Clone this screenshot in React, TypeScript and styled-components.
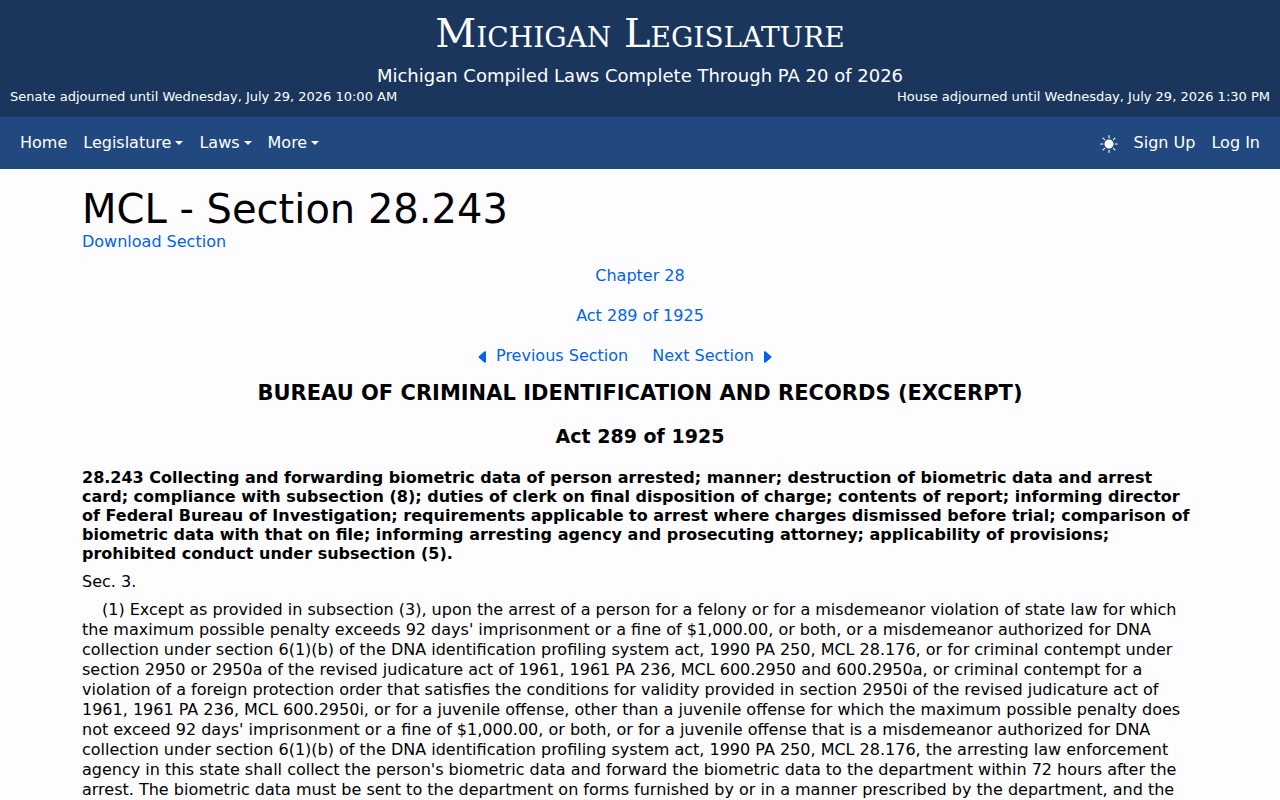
import React from "react";
import styled, { createGlobalStyle } from "styled-components";
import { BsSunFill, BsCaretLeftFill, BsCaretRightFill } from "react-icons/bs";

const GlobalStyle = createGlobalStyle`
  *, *::before, *::after { box-sizing: border-box; }
  html { scrollbar-width: none; }
  body {
    margin: 0;
    background: #fdfdff;
    color: #000;
    font-family: "DejaVu Sans", sans-serif;
    font-size: 16px;
    line-height: 24px;
  }
`;

const Page = styled.div`
  min-height: 100vh;
`;

const Banner = styled.header`
  padding: 4px 10px 11px;
  background: #1a365d;
  color: #fff;
  text-align: center;
`;

const SiteName = styled.div`
  margin-bottom: 2px;
  font-family: "DejaVu Serif", serif;
  font-size: 40px;
  line-height: 58px;
  font-variant: small-caps;
`;

const Currency = styled.div`
  font-size: 18px;
  line-height: 24px;
`;

const Adjournments = styled.div`
  display: flex;
  justify-content: space-between;
  font-size: 13px;
  line-height: 18px;
`;

const NavBar = styled.nav`
  display: flex;
  justify-content: space-between;
  padding: 6px 12px;
  background: #21487f;
`;

const NavGroup = styled.div`
  display: flex;
  align-items: center;
`;

const NavLink = styled.a`
  padding: 8px;
  color: #fff;
  text-decoration: none;
`;

const NavButton = styled.button<{ $caret?: boolean }>`
  display: flex;
  align-items: center;
  padding: 8px;
  border: 0;
  background: none;
  color: #fff;
  font: inherit;
  line-height: 24px;
  cursor: pointer;

  &::after {
    content: "";
    display: ${(p) => (p.$caret ? "block" : "none")};
    margin-left: 4px;
    border: 4px solid transparent;
    border-top-color: currentColor;
    border-bottom: 0;
  }
`;

const ThemeButton = styled(NavButton)`
  padding-top: 10px;
`;

const Content = styled.main`
  max-width: 1140px;
  margin: 0 auto;
  padding: 19px 12px 16px;
`;

const Title = styled.h1`
  margin: 0;
  font-size: 40px;
  font-weight: 400;
  line-height: 42px;
`;

const Link = styled.a`
  color: #0062ee;
  text-decoration: none;
`;

const Crumb = styled.div`
  margin-bottom: 16px;
  text-align: center;
`;

const Crumbs = styled.div`
  padding-top: 10px;
`;

const Pager = styled.div`
  display: flex;
  justify-content: center;
  gap: 24px;
  padding-right: 30px;
`;

const PagerLink = styled(Link)`
  display: flex;
  align-items: center;
  gap: 5px;

  svg {
    margin-top: 2px;
  }
`;

const ActTitle = styled.h2`
  margin: 12px 0 0;
  font-size: 21px;
  line-height: 26px;
  text-align: center;
`;

const ActNumber = styled.h3`
  margin: 18px 0 20px;
  font-size: 19px;
  line-height: 24px;
  text-align: center;
`;

const CatchLine = styled.h4`
  margin: 0 0 9px;
  font-size: 16px;
  line-height: 19px;
`;

const Paragraph = styled.p<{ $indent?: boolean }>`
  margin: 0 0 8px;
  line-height: 20px;
  text-indent: ${(p) => (p.$indent ? "20px" : "0")};
`;

export default function App() {
  return (
    <Page>
      <GlobalStyle />
      <Banner>
        <SiteName>Michigan Legislature</SiteName>
        <Currency>Michigan Compiled Laws Complete Through PA 20 of 2026</Currency>
        <Adjournments>
          <span>Senate adjourned until Wednesday, July 29, 2026 10:00 AM</span>
          <span>House adjourned until Wednesday, July 29, 2026 1:30 PM</span>
        </Adjournments>
      </Banner>
      <NavBar>
        <NavGroup>
          <NavLink href="#home">Home</NavLink>
          <NavButton $caret>Legislature</NavButton>
          <NavButton $caret>Laws</NavButton>
          <NavButton $caret>More</NavButton>
        </NavGroup>
        <NavGroup>
          <ThemeButton aria-label="Toggle theme"><BsSunFill size={18} /></ThemeButton>
          <NavLink href="#signup">Sign Up</NavLink>
          <NavLink href="#login">Log In</NavLink>
        </NavGroup>
      </NavBar>
      <Content>
        <Title>MCL - Section 28.243</Title>
        <Link href="#download">Download Section</Link>
        <Crumbs>
          <Crumb><Link href="#chapter">Chapter 28</Link></Crumb>
          <Crumb><Link href="#act">Act 289 of 1925</Link></Crumb>
        </Crumbs>
        <Pager>
          <PagerLink href="#previous"><BsCaretLeftFill size={16} />Previous Section</PagerLink>
          <PagerLink href="#next">Next Section<BsCaretRightFill size={16} /></PagerLink>
        </Pager>
        <ActTitle>BUREAU OF CRIMINAL IDENTIFICATION AND RECORDS (EXCERPT)</ActTitle>
        <ActNumber>Act 289 of 1925</ActNumber>
        <CatchLine>
          28.243 Collecting and forwarding biometric data of person arrested; manner; destruction of
          biometric data and arrest card; compliance with subsection (8); duties of clerk on final
          disposition of charge; contents of report; informing director of Federal Bureau of
          Investigation; requirements applicable to arrest where charges dismissed before trial;
          comparison of biometric data with that on file; informing arresting agency and prosecuting
          attorney; applicability of provisions; prohibited conduct under subsection (5).
        </CatchLine>
        <Paragraph>Sec. 3.</Paragraph>
        <Paragraph $indent>
          (1) Except as provided in subsection (3), upon the arrest of a person for a felony or for a
          misdemeanor violation of state law for which the maximum possible penalty exceeds 92 days'
          imprisonment or a fine of $1,000.00, or both, or a misdemeanor authorized for DNA collection
          under section 6(1)(b) of the DNA identification profiling system act, 1990 PA 250, MCL
          28.176, or for criminal contempt under section 2950 or 2950a of the revised judicature act
          of 1961, 1961 PA 236, MCL 600.2950 and 600.2950a, or criminal contempt for a violation of a
          foreign protection order that satisfies the conditions for validity provided in section
          2950i of the revised judicature act of 1961, 1961 PA 236, MCL 600.2950i, or for a juvenile
          offense, other than a juvenile offense for which the maximum possible penalty does not
          exceed 92 days' imprisonment or a fine of $1,000.00, or both, or for a juvenile offense that
          is a misdemeanor authorized for DNA collection under section 6(1)(b) of the DNA
          identification profiling system act, 1990 PA 250, MCL 28.176, the arresting law enforcement
          agency in this state shall collect the person's biometric data and forward the biometric
          data to the department within 72 hours after the arrest. The biometric data must be sent to
          the department on forms furnished by or in a manner prescribed by the department, and the
        </Paragraph>
      </Content>
    </Page>
  );
}
